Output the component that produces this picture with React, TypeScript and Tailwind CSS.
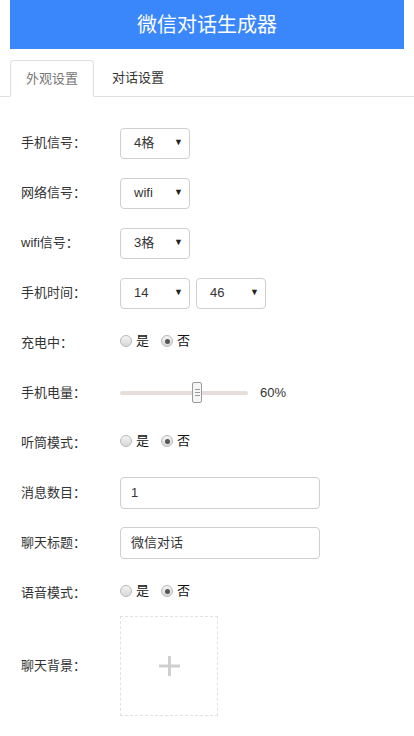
import React from "react";

const FONT = { fontFamily: '"Liberation Sans", "Noto Sans CJK SC", sans-serif' };

function Select({ value, width = "w-[70px]" }: { value: string; width?: string }) {
  return (
    <div className={`flex h-[31px] ${width} items-center justify-between rounded-[4px] border border-[#cfcfcf] bg-white pl-[13px] pr-[6px] text-[13px] text-[#333]`}>
      <span>{value}</span>
      <span className="text-[9px] text-[#222]">▼</span>
    </div>
  );
}

function Radio({ checked }: { checked?: boolean }) {
  return (
    <span className="flex h-[12px] w-[12px] items-center justify-center rounded-full border border-[#b8b8b8] bg-gradient-to-b from-[#f4f4f4] to-[#d8d8d8]">
      {checked && <span className="h-[5px] w-[5px] rounded-full bg-[#555]" />}
    </span>
  );
}

function YesNo() {
  return (
    <div className="mb-[4px] flex items-center text-[13px] text-[#111]">
      <Radio />
      <span className="ml-[4px]">是</span>
      <span className="ml-[12px]"><Radio checked /></span>
      <span className="ml-[4px]">否</span>
    </div>
  );
}

function Row({ label, children }: { label: string; children: React.ReactNode }) {
  return (
    <div className="flex h-[50px] items-center">
      <div className="w-[99px] text-[13px] text-[#333]">{label}</div>
      {children}
    </div>
  );
}

export default function App() {
  return (
    <div className="min-h-[736px] w-[414px] bg-white" style={FONT}>
      {/* header */}
      <div className="px-[10px]">
        <div className="flex h-[49px] items-center justify-center bg-[#3a87fb] text-[20px] text-white">
          微信对话生成器
        </div>
      </div>

      {/* tabs */}
      <div className="mt-[11px] flex border-b border-[#dedede] pl-[10px]">
        <div className="-mb-px flex h-[37px] w-[84px] items-center justify-center rounded-t-[4px] border border-[#dedede] border-b-white bg-white text-[13px] text-[#777]">
          外观设置
        </div>
        <div className="flex h-[36px] items-center pl-[18px] text-[13px] text-[#333]">对话设置</div>
      </div>

      {/* form */}
      <div className="mt-[21px] pl-[21px]">
        <Row label="手机信号：">
          <Select value="4格" />
        </Row>
        <Row label="网络信号：">
          <Select value="wifi" />
        </Row>
        <Row label="wifi信号：">
          <Select value="3格" />
        </Row>
        <Row label="手机时间：">
          <div className="flex gap-[6px]">
            <Select value="14" />
            <Select value="46" />
          </div>
        </Row>
        <Row label="充电中：">
          <YesNo />
        </Row>
        <Row label="手机电量：">
          <div className="flex items-center">
            <div className="relative h-[4px] w-[128px] rounded-full bg-[#e6dedb]">
              <div className="absolute left-[72px] top-[-9px] flex h-[21px] w-[10px] flex-col items-center justify-center gap-[2px] rounded-[2px] border border-[#9a9a9a] bg-[#f6f6f6]">
                <span className="h-px w-[5px] bg-[#999]" />
                <span className="h-px w-[5px] bg-[#999]" />
                <span className="h-px w-[5px] bg-[#999]" />
              </div>
            </div>
            <span className="ml-[12px] text-[13px] text-[#333]">60%</span>
          </div>
        </Row>
        <Row label="听筒模式：">
          <YesNo />
        </Row>
        <Row label="消息数目：">
          <div className="flex h-[32px] w-[200px] items-center rounded-[4px] border border-[#cfcfcf] px-[10px] text-[13px] text-[#333]">
            1
          </div>
        </Row>
        <Row label="聊天标题：">
          <div className="flex h-[32px] w-[200px] items-center rounded-[4px] border border-[#cfcfcf] px-[10px] text-[13px] text-[#333]">
            微信对话
          </div>
        </Row>
        <Row label="语音模式：">
          <YesNo />
        </Row>
        <div className="-mt-[2px] flex items-center">
          <div className="w-[99px] text-[13px] text-[#333]">聊天背景：</div>
          <div className="flex h-[100px] w-[98px] items-center justify-center border border-dashed border-[#e2e2e2]">
            <svg width="22" height="22" viewBox="0 0 22 22">
              <rect x="10" y="1" width="3" height="20" fill="#cfcfcf" />
              <rect x="1" y="9.5" width="21" height="3" fill="#cfcfcf" />
            </svg>
          </div>
        </div>
      </div>
    </div>
  );
}
